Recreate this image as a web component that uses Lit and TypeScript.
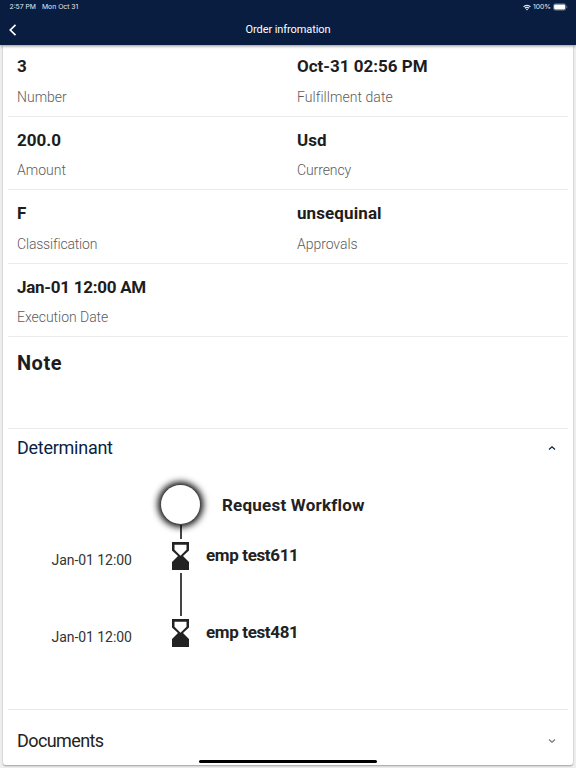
import { LitElement, html, css, svg, nothing } from "lit";
import { customElement, property } from "lit/decorators.js";

interface Field {
  value: string;
  label: string;
  vs?: number;
  ls?: number;
}

const FIELDS: Field[][] = [
  [
    { value: "3", label: "Number" },
    { value: "Oct-31 02:56 PM", label: "Fulfillment date", ls: 0.05 },
  ],
  [
    { value: "200.0", label: "Amount" },
    { value: "Usd", label: "Currency", ls: -0.1 },
  ],
  [
    { value: "F", label: "Classification", ls: -0.18 },
    { value: "unsequinal", label: "Approvals", vs: 0.1, ls: -0.05 },
  ],
  [{ value: "Jan-01 12:00 AM", label: "Execution Date", vs: -0.26, ls: -0.04 }],
];

const STEPS = [
  { date: "Jan-01 12:00", name: "emp test611" },
  { date: "Jan-01 12:00", name: "emp test481" },
];

@customElement("status-bar")
class StatusBar extends LitElement {
  static styles = css`
    :host {
      display: flex;
      align-items: center;
      height: 14px;
      padding: 0 8px 0 9.5px;
      font: 400 6.8px/14px Inter, sans-serif;
      color: #e6eaf0;
    }
    .date { margin-left: 6px; }
    .wifi { margin: 0 2px 0 auto; }
    .battery { margin-left: 2px; }
    svg { display: block; }
  `;
  render() {
    return html`
      <span>2:57 PM</span>
      <span class="date">Mon Oct 31</span>
      <svg class="wifi" width="8" height="7" viewBox="0 0 8 7" fill="none" stroke="#e6eaf0" stroke-width="1.25">
        <path d="M.6 2.7a4.8 4.8 0 0 1 6.8 0M2 4.3a2.8 2.8 0 0 1 4 0" />
        <path d="M4 6.4 2.9 5.2a1.6 1.6 0 0 1 2.2 0z" fill="#e6eaf0" stroke="none" />
      </svg>
      <span>100%</span>
      <svg class="battery" width="15" height="8" viewBox="0 0 15 8">
        <rect x=".4" y=".9" width="12.4" height="6.2" rx="1.8" fill="none" stroke="#8b96a9" stroke-width=".7" />
        <rect x="1.1" y="1.6" width="11" height="4.8" rx="1.1" fill="#fff" />
        <path d="M13.5 3v2q.9-.3.9-1t-.9-1" fill="#8b96a9" />
      </svg>
    `;
  }
}

@customElement("field-row")
class FieldRow extends LitElement {
  @property({ attribute: false }) fields: Field[] = [];
  static styles = css`
    :host {
      display: grid;
      grid-template-columns: 280px 1fr;
      margin: 0 5px;
      padding: 0 9px;
      height: 72.5px;
      align-items: end;
      border-bottom: 1px solid #ebebeb;
    }
    .value { font-weight: 700; font-size: 17px; line-height: 20px; color: #1d1d1d; }
    .label { font-weight: 300; font-size: 14px; line-height: 20px; color: #5c5c5c; margin: 10.500px 0 9px; }
  `;
  render() {
    return this.fields.map(
      (f) => html`<div>
        <div class="value" style="letter-spacing:${f.vs ?? 0}px">${f.value}</div>
        <div class="label" style="letter-spacing:${f.ls ?? 0}px">${f.label}</div>
      </div>`,
    );
  }
}

@customElement("section-head")
class SectionHead extends LitElement {
  @property() heading = "";
  @property({ type: Boolean, reflect: true }) open = false;
  static styles = css`
    :host {
      display: flex;
      align-items: center;
      justify-content: space-between;
      height: 38px;
      padding: 0 17px 0 14px;
      font-size: 18px;
      letter-spacing: -0.6px;
      color: #222;
    }
    :host([open]) { color: #0a1f44; letter-spacing: -0.26px; }
    svg { color: #777; }
    :host([open]) svg { color: #0a1f44; }
  `;
  render() {
    return html`<span>${this.heading}</span>
      <svg width="8" height="6" viewBox="0 0 8 6" fill="none" stroke="currentColor" stroke-width="1.2">
        <path d=${this.open ? "M1 4.5 4 1.7 7 4.5" : "M1 1.5 4 4.3 7 1.5"} />
      </svg>`;
  }
}

@customElement("work-flow")
class WorkFlow extends LitElement {
  static styles = css`
    :host { display: block; padding-top: 18.6px; height: 223.4px; }
    .row { display: grid; grid-template-columns: 48.5px 108px 42px 1fr; height: 40px; }
    .circle {
      grid-column: 3;
      width: 39px;
      height: 39px;
      margin-left: 1.5px;
      border-radius: 50%;
      background: #fff;
      box-shadow: 0 0 7px 3px #000;
    }
    .title { font: 700 17px/40px Roboto, sans-serif; color: #222; padding-left: 20.5px; letter-spacing: 0.22px; }
    .line { width: 2px; margin-left: 176.5px; background: #444; }
    .first { height: 14px; }
    .next { height: 43px; }
    .step { height: 34px; align-items: center; }
    .date { grid-column: 2; font-size: 14px; line-height: 20px; padding-top: 7.5px; letter-spacing: -0.05px; color: #333; }
    .icon { width: 17px; height: 28px; margin-left: 12px; display: block; }
    .name {
      font-weight: 700;
      font-size: 17px;
      line-height: 20px;
      padding: 0 0 2px 4.5px;
      letter-spacing: -0.36px;
      color: #222;
    }
  `;
  render() {
    return html`
      <div class="row">
        <div class="circle"></div>
        <div class="title">Request Workflow</div>
      </div>
      <div class="line first"></div>
      ${STEPS.map(
        (s, i) => html`
          ${i ? html`<div class="line next"></div>` : nothing}
          <div class="row step">
            <span class="date">${s.date}</span>
            <svg class="icon" viewBox="0 0 17 28">
              ${svg`<path fill="#222" d="M0 0h17v8.5L11 14l6 6v8H0v-8l6-6-6-5.5z"/><path fill="#fff" d="M2.5 2.8h12v5L8.5 13.8 2.5 7.8z"/>`}
            </svg>
            <span class="name">${s.name}</span>
          </div>
        `,
      )}
    `;
  }
}

@customElement("app-root")
class AppRoot extends LitElement {
  static styles = css`
    :host {
      display: flex;
      flex-direction: column;
      position: relative;
      height: 768px;
      overflow: hidden;
      background: #efefef;
      font-family: Roboto, sans-serif;
    }
    header {
      height: 45px;
      flex: none;
      background: #081d40;
      box-shadow: 0 1px 3px rgba(0, 0, 0, 0.45);
      z-index: 1;
    }
    .nav { display: grid; grid-template-columns: 40px 1fr 40px; align-items: center; height: 31px; color: #fff; }
    .back { margin-left: 8px; display: block; }
    .title { text-align: center; font-size: 11px; letter-spacing: -0.08px; }
    main {
      flex: none;
      height: 720px;
      margin: 0 3px;
      background: #fff;
      border-radius: 0 0 3px 3px;
      box-shadow: 0 1px 2px rgba(0, 0, 0, 0.35);
    }
    .first { height: 70.6px; }
    .note {
      height: 91.5px;
      margin: 0 5px;
      padding: 0 9px;
      box-sizing: border-box;
      border-bottom: 1px solid #ebebeb;
      font: 700 20px/52.5px Roboto, sans-serif;
      letter-spacing: 0.5px;
      color: #1d1d1d;
    }
    .rule { height: 1px; margin: 0 5px; background: #e8e8e8; }
    .docs { margin-top: 12px; }
    .home {
      position: absolute;
      left: 199px;
      bottom: 5px;
      width: 178px;
      height: 3px;
      border-radius: 2px;
      background: #000;
    }
  `;
  render() {
    return html`
      <header>
        <status-bar></status-bar>
        <div class="nav">
          <svg class="back" width="10" height="12" viewBox="0 0 10 12" fill="none" stroke="#fff" stroke-width="1.7">
            <path d="M7.5 .8 2.3 6l5.2 5.2" />
          </svg>
          <span class="title">Order infromation</span>
        </div>
      </header>
      <main>
        ${FIELDS.map((f, i) => html`<field-row class=${i ? "" : "first"} .fields=${f}></field-row>`)}
        <div class="note">Note</div>
        <section-head heading="Determinant" open></section-head>
        <work-flow></work-flow>
        <div class="rule"></div>
        <section-head class="docs" heading="Documents"></section-head>
      </main>
      <div class="home"></div>
    `;
  }
}
